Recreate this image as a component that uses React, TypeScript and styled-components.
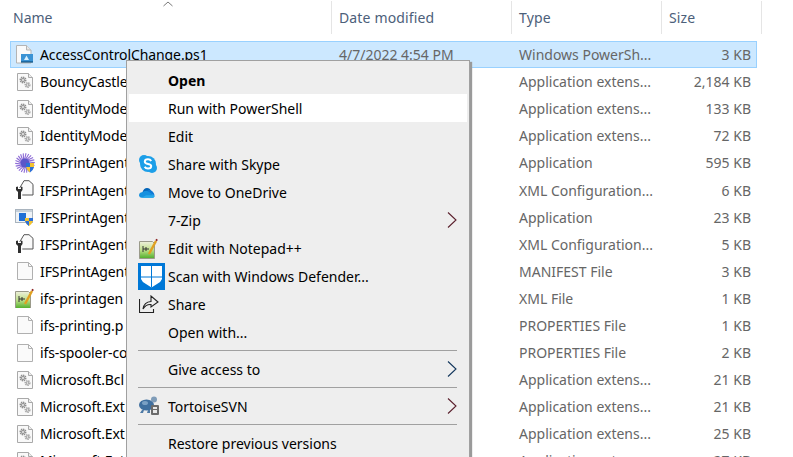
import * as React from "react"
import styled, { createGlobalStyle } from "styled-components"

const GlobalStyle = createGlobalStyle`
  html, body {
    margin: 0;
    width: 793px;
    height: 457px;
    overflow: hidden;
    background: #fff;
    font-family: "Noto Sans", "Open Sans", sans-serif;
  }
`

const Page = styled.div`
  position: relative;
  width: 793px;
  height: 457px;
  overflow: hidden;
  padding-left: 10px;
  box-sizing: border-box;
`

const Header = styled.div`
  display: grid;
  grid-template-columns: 322px 180px 150px 100px;
  height: 33px;
  margin-top: 1px;
  margin-bottom: 7.15px;
  position: relative;
`

const HeaderCell = styled.div`
  border-right: 1px solid #e5e5e5;
  padding: 0 0 0 7px;
  color: #4c607a;
  font-size: 14px;
  letter-spacing: 0.15px;
  line-height: 33px;
  &:first-child {
    padding-left: 3px;
    letter-spacing: 0;
  }
`

const SortCaret = styled.svg`
  position: absolute;
  left: 153px;
  top: 0;
`

const Row = styled.div<{ $selected?: boolean }>`
  display: grid;
  grid-template-columns: 320px 180px 150px 90px;
  width: 747px;
  height: 27.09px;
  box-sizing: border-box;
  align-items: center;
  font-size: 14px;
  color: #666;
  white-space: nowrap;
  border: 1px solid ${(p) => (p.$selected ? "#99d1ff" : "transparent")};
  background: ${(p) => (p.$selected ? "#cce8ff" : "transparent")};
`

const NameCell = styled.div<{ $clipped?: boolean }>`
  display: flex;
  align-items: center;
  gap: 5px;
  padding-left: 3px;
  color: #000;
  letter-spacing: -0.1px;
  max-width: ${(p) => (p.$clipped ? "112px" : "none")};
  overflow: ${(p) => (p.$clipped ? "hidden" : "visible")};
`

const IconSlot = styled.span`
  flex: none;
  width: 21px;
  height: 20px;
  display: flex;
  align-items: center;
  justify-content: center;
`

const DateCell = styled.div`
  padding-left: 8px;
`

const TypeCell = styled.div`
  padding-left: 8px;
`

const SizeCell = styled.div`
  text-align: right;
`

const Menu = styled.div`
  position: absolute;
  left: 126px;
  top: 60px;
  width: 344px;
  height: 420px;
  box-sizing: border-box;
  padding: 5px 2px;
  background: #eeeeee;
  border: 1px solid #a0a0a0;
  box-shadow: 2px 2px 1px #9a9a9a;
  color: #000;
  font-size: 14px;
`

const MenuItem = styled.div<{ $active?: boolean; $bold?: boolean }>`
  position: relative;
  display: flex;
  align-items: center;
  height: 28px;
  padding-left: 39px;
  background: ${(p) => (p.$active ? "#fff" : "transparent")};
  font-weight: ${(p) => (p.$bold ? 700 : 400)};
`

const MenuIcon = styled.span`
  position: absolute;
  left: 10px;
  top: 0;
  height: 28px;
  display: flex;
  align-items: center;
`

const DefenderSlot = styled(MenuIcon)`
  left: 9px;
`

const Chevron = styled.svg`
  position: absolute;
  right: 10px;
  top: 6px;
`

const Separator = styled.div`
  height: 1px;
  margin: 4px 10px 4px 9px;
  background: #a0a0a0;
`

const PsIcon = () => (
  <svg width="17" height="19" viewBox="0 0 17 19">
    <path d="M.5 .5h10l4.500 4.500v13H.5z" fill="#fafafa" stroke="#b4b4b4" />
    <path d="M10.500 .5v4.500h4.500" fill="#e8e8e8" stroke="#b4b4b4" />
    <rect x="5" y="9" width="12" height="8" fill="#3b93d4" />
    <path d="M8 15l2.500-4.500L13 15z" fill="#d8f0ff" />
    <path d="M5 17h12" stroke="#0d4f80" strokeWidth="1.200" />
  </svg>
)

const Gear = ({ cx, cy, r, fill }: { cx: number; cy: number; r: number; fill: string }) => (
  <g>
    <circle cx={cx} cy={cy} r={r} fill="none" stroke={fill} strokeWidth="1.800" strokeDasharray="1.300 .7" />
    <circle cx={cx} cy={cy} r={r * 0.55} fill="none" stroke={fill} strokeWidth="1.100" />
  </g>
)

const DllIcon = () => (
  <svg width="16" height="18" viewBox="0 0 16 18">
    <path d="M.5 .5h11l4 4v13H.5z" fill="#f9f9f9" stroke="#a9a9a9" />
    <path d="M11.500 .5v4h4" fill="#eee" stroke="#a9a9a9" />
    <Gear cx={6} cy={7} r={2.6} fill="#8e8e8e" />
    <Gear cx={10.500} cy={12} r={2.2} fill="#acacac" />
  </svg>
)

const BlankIcon = () => (
  <svg width="16" height="18" viewBox="0 0 16 18">
    <path d="M.5 .5h11l4 4v13H.5z" fill="#fafafa" stroke="#b0b0b0" />
    <path d="M11.500 .5v4h4" fill="none" stroke="#b0b0b0" />
  </svg>
)

const ConfigIcon = () => (
  <svg width="19" height="20" viewBox="0 0 19 20">
    <path d="M4.700 8L9 .7h5l4 3.600V15H7.300" fill="#fafafa" stroke="#555" />
    <path d="M1 7v3l2 2v7h3v-7l1.500-2V7L6 6.500V9H3V6.500z" fill="#2f2f2f" />
  </svg>
)

const AgentIcon = () => (
  <svg width="20" height="20" viewBox="0 0 20 20">
    {Array.from({ length: 22 }).map((_, i) => {
      const a = (i * Math.PI) / 11
      return (
        <line
          key={i}
          x1={10 + 3.500 * Math.cos(a)}
          y1={10 + 3.500 * Math.sin(a)}
          x2={10 + 9.800 * Math.cos(a + 0.25)}
          y2={10 + 9.800 * Math.sin(a + 0.25)}
          stroke="#8d6bd6"
          strokeWidth="1.100"
        />
      )
    })}
    <circle cx="10" cy="10" r="4.500" fill="#5a55c8" />
    <path d="M11 10h8v4q-1 4-4 5.500q-3-1.500-4-5.500z" fill="#2b6fd6" />
    <path d="M15 10h4v4h-4zM11 14h4v5.500q-3-1.500-4-5.500z" fill="#f2c230" />
  </svg>
)

const AppIcon = () => (
  <svg width="19" height="17" viewBox="0 0 19 17">
    <rect x=".5" y=".5" width="17" height="13" fill="#eef2f6" stroke="#a9b4be" />
    <rect x="1" y="1" width="16" height="2" fill="#c6d0da" />
    <rect x="4" y="4" width="7" height="8" fill="#1f6fd6" />
    <path d="M10 9h8v3q-1 3-4 5q-3-2-4-5z" fill="#f2c230" />
    <path d="M14 9h4v3h-4zM10 12h4v5q-3-2-4-5z" fill="#2b6fd6" />
  </svg>
)

const NotepadIcon = () => (
  <svg width="19" height="21" viewBox="0 0 19 21">
    <defs>
      <linearGradient id="padFill" x1="0" y1="0" x2="0" y2="1">
        <stop offset="0" stopColor="#eef0dc" />
        <stop offset=".5" stopColor="#bfe08a" />
        <stop offset="1" stopColor="#4fae2a" />
      </linearGradient>
    </defs>
    <path d="M.5 3.500h13l2 2v15H.5z" fill="url(#padFill)" stroke="#9a9a8a" />
    <path d="M4 8v6M7 9v4M4 11h6" stroke="#333" strokeWidth="1" />
    <path d="M10 16L17 3" stroke="#e0a020" strokeWidth="2.400" />
    <path d="M16.800 1.500l1.600 1" stroke="#8a2020" strokeWidth="1.600" />
  </svg>
)

const SkypeIcon = () => (
  <svg width="18" height="18" viewBox="0 0 18 18">
    <circle cx="5" cy="5" r="5" fill="#1d9fe8" />
    <circle cx="13" cy="13" r="5" fill="#1d9fe8" />
    <circle cx="9" cy="9" r="8" fill="#1d9fe8" />
    <path
      d="M12.200 6C11.400 4.700 10.200 4.300 9 4.300c-2 0-3.200 1-3.200 2.400 0 3.100 6.400 1.700 6.400 4.400 0 1.400-1.300 2.500-3.200 2.500-1.400 0-2.600-.5-3.300-1.800"
      fill="none"
      stroke="#fff"
      strokeWidth="2"
    />
  </svg>
)

const OneDriveIcon = () => (
  <svg width="16" height="11" viewBox="0 0 18 12">
    <path d="M4 5.500Q5.500 1 9 1q3.500 0 4.500 3.500L6 8z" fill="#0364b8" />
    <path d="M9 4q3-2 6 .5Q17 6 17.500 9L11 7z" fill="#0f78d4" />
    <path d="M0 9.500Q0 6 4 5.500 6 4 9 4l8 5q1 2-1 3H3Q.5 12 0 9.500z" fill="#1490df" />
    <path d="M3 12h13q2-1 1.500-3H8z" fill="#28a8ea" />
  </svg>
)

const DefenderIcon = () => (
  <svg width="27" height="27" viewBox="0 0 27 27">
    <rect width="27" height="27" fill="#0078d7" />
    <path d="M3 3h21v13q-1 3-5 5l-5.500 3.500L8 21q-4-2-5-5z" fill="#fff" />
    <path d="M13.500 3v21.500M3 14h21" stroke="#0078d7" strokeWidth="1" />
  </svg>
)

const ShareIcon = () => (
  <svg width="20" height="18" viewBox="0 0 20 18" fill="none" stroke="#222" strokeWidth="1.100">
    <path d="M.5 4v13.500h14V14" />
    <path d="M4 14q1-7 8-7.500V1l7 6-7 5V9.500Q7 9 4 14z" fill="#eee" />
  </svg>
)

const TortoiseIcon = () => (
  <svg width="20" height="20" viewBox="0 0 20 20">
    <ellipse cx="7.500" cy="9" rx="7.500" ry="5.500" fill="#3f6f9f" />
    <ellipse cx="6" cy="7" rx="3" ry="2" fill="#7aa0c4" />
    <circle cx="15" cy="3.500" r="3" fill="#7f9cb8" />
    <path d="M3 14l-2 3h3l1-3zM9 14l-1 3h3v-3z" fill="#4d7aa6" />
    <rect x="12" y="9" width="8" height="10" rx="1" fill="#6b6b6b" />
    <rect x="14" y="11" width="4" height="2" fill="#e8e8e8" />
    <rect x="14" y="14" width="4" height="3" fill="#e8e8e8" />
  </svg>
)

const Arrow = ({ color }: { color: string }) => (
  <Chevron width="10" height="16" viewBox="0 0 10 16" fill="none" stroke={color} strokeWidth="1.100">
    <path d="M1 .5l8 7.500-8 7.500" />
  </Chevron>
)

type FileRow = { icon: React.ReactNode; name: string; type: string; size: string }

const extension = "Application extens..."

const files: FileRow[] = [
  { icon: <DllIcon />, name: "BouncyCastle.", type: extension, size: "2,184 KB" },
  { icon: <DllIcon />, name: "IdentityModel", type: extension, size: "133 KB" },
  { icon: <DllIcon />, name: "IdentityModel", type: extension, size: "72 KB" },
  { icon: <AgentIcon />, name: "IFSPrintAgent", type: "Application", size: "595 KB" },
  { icon: <ConfigIcon />, name: "IFSPrintAgent", type: "XML Configuration...", size: "6 KB" },
  { icon: <AppIcon />, name: "IFSPrintAgent", type: "Application", size: "23 KB" },
  { icon: <ConfigIcon />, name: "IFSPrintAgent", type: "XML Configuration...", size: "5 KB" },
  { icon: <BlankIcon />, name: "IFSPrintAgent", type: "MANIFEST File", size: "3 KB" },
  { icon: <NotepadIcon />, name: "ifs-printagen", type: "XML File", size: "1 KB" },
  { icon: <BlankIcon />, name: "ifs-printing.p", type: "PROPERTIES File", size: "1 KB" },
  { icon: <BlankIcon />, name: "ifs-spooler-co", type: "PROPERTIES File", size: "2 KB" },
  { icon: <DllIcon />, name: "Microsoft.Bcl", type: extension, size: "21 KB" },
  { icon: <DllIcon />, name: "Microsoft.Ext", type: extension, size: "21 KB" },
  { icon: <DllIcon />, name: "Microsoft.Ext", type: extension, size: "25 KB" },
  { icon: <DllIcon />, name: "Microsoft.Ext", type: extension, size: "27 KB" },
]

const App = () => (
  <Page>
    <GlobalStyle />
    <Header>
      <HeaderCell>Name</HeaderCell>
      <HeaderCell>Date modified</HeaderCell>
      <HeaderCell>Type</HeaderCell>
      <HeaderCell>Size</HeaderCell>
      <SortCaret width="10" height="6" viewBox="0 0 10 6" fill="none" stroke="#7a7a7a">
        <path d="M.5 5L5 1l4.500 4" />
      </SortCaret>
    </Header>
    <Row $selected>
      <NameCell>
        <IconSlot>
          <PsIcon />
        </IconSlot>
        AccessControlChange.ps1
      </NameCell>
      <DateCell>4/7/2022 4:54 PM</DateCell>
      <TypeCell>Windows PowerSh...</TypeCell>
      <SizeCell>3 KB</SizeCell>
    </Row>
    {files.map((f, i) => (
      <Row key={i}>
        <NameCell $clipped>
          <IconSlot>{f.icon}</IconSlot>
          {f.name}
        </NameCell>
        <DateCell />
        <TypeCell>{f.type}</TypeCell>
        <SizeCell>{f.size}</SizeCell>
      </Row>
    ))}
    <Menu>
      <MenuItem $bold>Open</MenuItem>
      <MenuItem $active>Run with PowerShell</MenuItem>
      <MenuItem>Edit</MenuItem>
      <MenuItem>
        <MenuIcon>
          <SkypeIcon />
        </MenuIcon>
        Share with Skype
      </MenuItem>
      <MenuItem>
        <MenuIcon>
          <OneDriveIcon />
        </MenuIcon>
        Move to OneDrive
      </MenuItem>
      <MenuItem>
        7-Zip
        <Arrow color="#5a1f2c" />
      </MenuItem>
      <MenuItem>
        <MenuIcon>
          <NotepadIcon />
        </MenuIcon>
        Edit with Notepad++
      </MenuItem>
      <MenuItem>
        <DefenderSlot>
          <DefenderIcon />
        </DefenderSlot>
        Scan with Windows Defender...
      </MenuItem>
      <MenuItem>
        <MenuIcon>
          <ShareIcon />
        </MenuIcon>
        Share
      </MenuItem>
      <MenuItem>Open with...</MenuItem>
      <Separator />
      <MenuItem>
        Give access to
        <Arrow color="#12365c" />
      </MenuItem>
      <Separator />
      <MenuItem>
        <MenuIcon>
          <TortoiseIcon />
        </MenuIcon>
        TortoiseSVN
        <Arrow color="#5a1f2c" />
      </MenuItem>
      <Separator />
      <MenuItem>Restore previous versions</MenuItem>
    </Menu>
  </Page>
)

export default App
